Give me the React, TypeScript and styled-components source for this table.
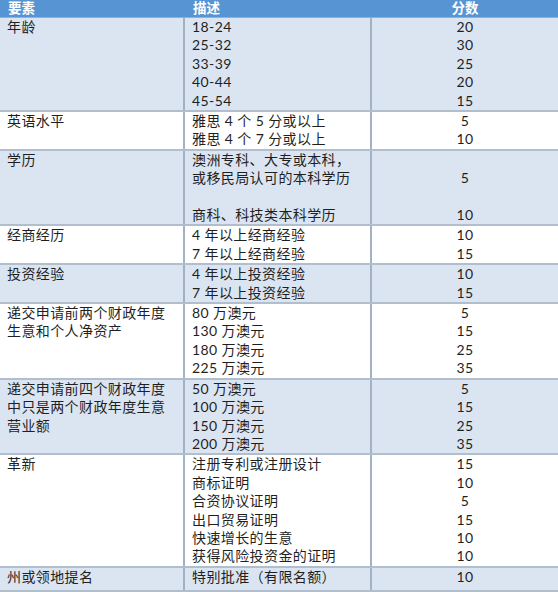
import React from 'react';
import styled, { createGlobalStyle } from 'styled-components';

const GlobalStyle = createGlobalStyle`
  html, body {
    margin: 0;
    padding: 0;
    background: #ffffff;
  }
  body {
    font-family: "Lato", "Noto Sans CJK SC", sans-serif;
    font-size: 14px;
    color: #1f1f1f;
  }
`;

const Table = styled.div`
  width: 558px;
  height: 592px;
  display: flex;
  flex-direction: column;
  overflow: hidden;
`;

const Row = styled.div<{ $shaded?: boolean; $fill?: boolean }>`
  display: grid;
  grid-template-columns: 185px 187px 1fr;
  background: ${p => (p.$shaded ? '#dbe5f1' : '#ffffff')};
  border-bottom: 2px solid #b0bece;
  flex: ${p => (p.$fill ? '1' : '0 0 auto')};
`;

const HeadRow = styled.div`
  display: grid;
  grid-template-columns: 185px 187px 1fr;
  height: 17px;
  background: #5694d4;
  border-bottom: 1px solid #8fb2dc;
  color: #ffffff;
  font-weight: 700;
  font-size: 13.5px;
  line-height: 17px;
`;

const HeadCell = styled.div<{ $center?: boolean }>`
  padding-left: ${p => (p.$center ? '0' : '8px')};
  text-align: ${p => (p.$center ? 'center' : 'left')};
`;

const Cell = styled.div<{ $center?: boolean; $divider?: boolean }>`
  display: flex;
  flex-direction: column;
  padding-left: ${p => (p.$center ? '0' : '7px')};
  align-items: ${p => (p.$center ? 'center' : 'flex-start')};
  border-right: ${p => (p.$divider ? '2px solid #a3b2c3' : 'none')};
  line-height: 18.4px;
  letter-spacing: 0.4px;
`;

const Line = styled.span`
  display: block;
  min-height: 18.4px;
  white-space: nowrap;
`;

type Item = [string, string];

interface Group {
  factor: string[];
  items: Item[];
}

const groups: Group[] = [
  {
    factor: ['年龄'],
    items: [
      ['18-24', '20'],
      ['25-32', '30'],
      ['33-39', '25'],
      ['40-44', '20'],
      ['45-54', '15'],
    ],
  },
  {
    factor: ['英语水平'],
    items: [
      ['雅思 4 个 5 分或以上', '5'],
      ['雅思 4 个 7 分或以上', '10'],
    ],
  },
  {
    factor: ['学历'],
    items: [
      ['澳洲专科、大专或本科，', ''],
      ['或移民局认可的本科学历', '5'],
      ['', ''],
      ['商科、科技类本科学历', '10'],
    ],
  },
  {
    factor: ['经商经历'],
    items: [
      ['4 年以上经商经验', '10'],
      ['7 年以上经商经验', '15'],
    ],
  },
  {
    factor: ['投资经验'],
    items: [
      ['4 年以上投资经验', '10'],
      ['7 年以上投资经验', '15'],
    ],
  },
  {
    factor: ['递交申请前两个财政年度', '生意和个人净资产'],
    items: [
      ['80 万澳元', '5'],
      ['130 万澳元', '15'],
      ['180 万澳元', '25'],
      ['225 万澳元', '35'],
    ],
  },
  {
    factor: ['递交申请前四个财政年度', '中只是两个财政年度生意', '营业额'],
    items: [
      ['50 万澳元', '5'],
      ['100 万澳元', '15'],
      ['150 万澳元', '25'],
      ['200 万澳元', '35'],
    ],
  },
  {
    factor: ['革新'],
    items: [
      ['注册专利或注册设计', '15'],
      ['商标证明', '10'],
      ['合资协议证明', '5'],
      ['出口贸易证明', '15'],
      ['快速增长的生意', '10'],
      ['获得风险投资金的证明', '10'],
    ],
  },
  {
    factor: ['州或领地提名'],
    items: [['特别批准（有限名额）', '10']],
  },
];

const App = () => (
  <Table>
    <GlobalStyle />
    <HeadRow>
      <HeadCell>要素</HeadCell>
      <HeadCell>描述</HeadCell>
      <HeadCell $center>分数</HeadCell>
    </HeadRow>
    {groups.map((g, i) => (
      <Row key={g.factor[0]} $shaded={i % 2 === 0} $fill={i === groups.length - 1}>
        <Cell $divider>
          {g.factor.map(f => (
            <Line key={f}>{f}</Line>
          ))}
        </Cell>
        <Cell $divider>
          {g.items.map(([d], j) => (
            <Line key={j}>{d}</Line>
          ))}
        </Cell>
        <Cell $center>
          {g.items.map(([, s], j) => (
            <Line key={j}>{s}</Line>
          ))}
        </Cell>
      </Row>
    ))}
  </Table>
);

export default App;
